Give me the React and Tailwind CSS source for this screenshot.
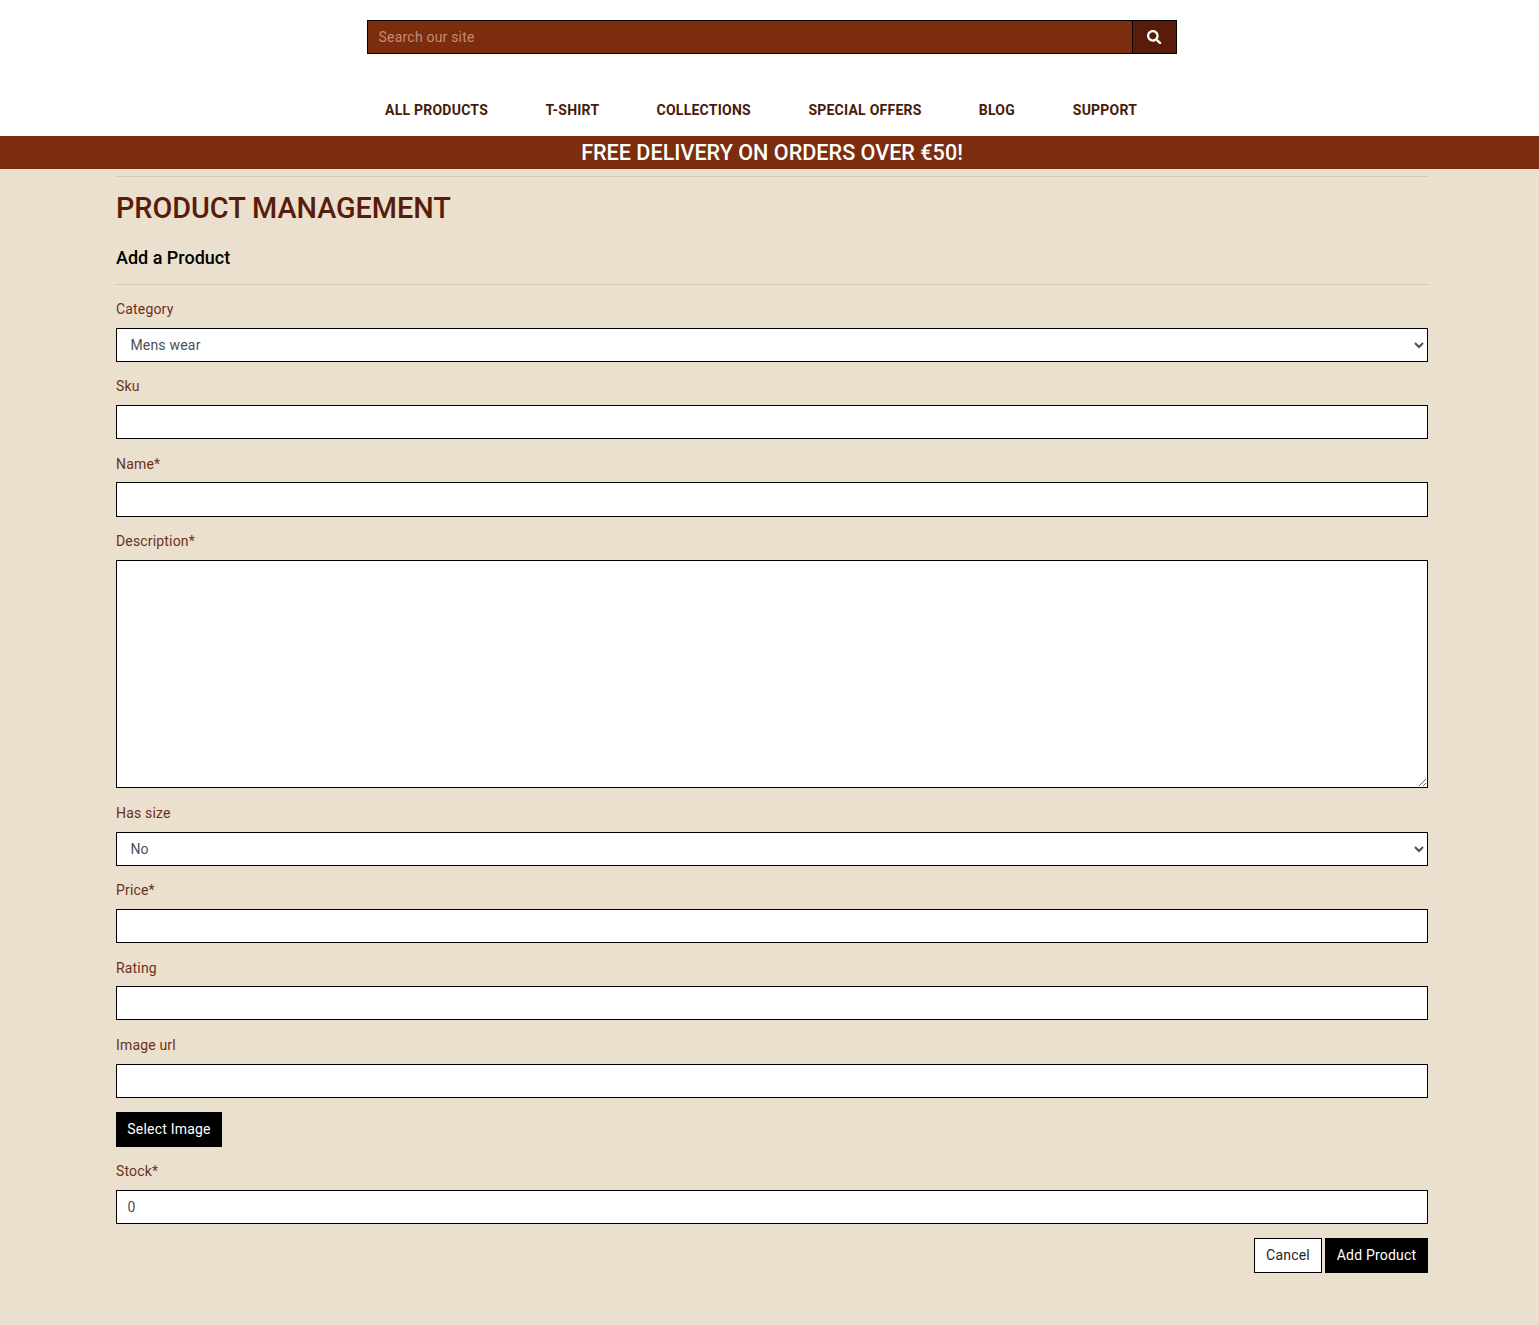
const field =
  'block w-full h-[34.2px] rounded-none border border-black bg-white text-[14px] tracking-[0.2px] text-[#495057] outline-none';
const input = `${field} px-[10.4px] py-0`;
const select = `${field} py-0 pr-[9.8px] pl-[9.4px]`;

const navItems = [
  ['ALL PRODUCTS', 'w-[160.4px]'],
  ['T-SHIRT', 'w-[111.2px]'],
  ['COLLECTIONS', 'w-[151.8px]'],
  ['SPECIAL OFFERS', 'w-[170.4px]'],
  ['BLOG', 'w-[94px]'],
  ['SUPPORT', ''],
];

function Field({ label, children }) {
  return (
    <div className="mb-[14.4px]">
      <label className="mb-[7.2px] block text-[14px] leading-[21.6px] tracking-[0.17px] text-[#6a3019]">{label}</label>
      {children}
    </div>
  );
}

function Header() {
  return (
    <header className="h-[136px] bg-white pt-5">
      <form className="ml-[367px] flex h-[34px] w-[810px]">
        <input
          type="text"
          placeholder="Search our site"
          className="min-w-0 flex-1 border border-black bg-[#7c2d0e] px-[10.6px] py-0 text-[14px] tracking-[0.2px] outline-none placeholder:text-[#c28b78]"
        />
        <button type="button" aria-label="Search" className="-ml-px flex w-[45px] items-center justify-center border border-black bg-[#591c0a] text-white">
          <svg viewBox="0 0 512 512" className="size-[14.4px]" fill="currentColor">
            <path d="M505 442.7L405.3 343c-4.5-4.5-10.6-7-17-7H372c27.6-35.3 44-79.7 44-128C416 93.1 322.9 0 208 0S0 93.1 0 208s93.1 208 208 208c48.3 0 92.7-16.4 128-44v16.3c0 6.4 2.5 12.5 7 17l99.7 99.7c9.4 9.4 24.6 9.4 33.9 0l28.3-28.3c9.4-9.4 9.4-24.6.1-34zM208 336c-70.7 0-128-57.2-128-128 0-70.7 57.2-128 128-128 70.7 0 128 57.2 128 128 0 70.7-57.2 128-128 128z" />
          </svg>
        </button>
      </form>
      <nav className="mt-[46px] ml-[385px] flex text-[14px] leading-[21px] font-bold tracking-[0.24px] text-[#471a0a]">
        {navItems.map(([item, width]) => (
          <a key={item} href="#" className={`whitespace-nowrap ${width}`}>{item}</a>
        ))}
      </nav>
    </header>
  );
}

export default function App() {
  return (
    <div className="h-[1325px] overflow-hidden bg-[#ebe0ce] font-[Roboto,sans-serif] text-[14.4px]">
      <Header />
      <div className="flex h-[33px] justify-center bg-[#7c2d0e] pl-[5px] text-[21.6px] leading-[33px] font-medium text-white">
        <h4>FREE DELIVERY ON ORDERS OVER €50!</h4>
      </div>
      <main className="ml-[116px] w-[1312px] pt-[7px]">
        <hr className="border-t border-[#d3c9b8]" />
        <h2 className="mt-[14px] h-[35px] text-[28.8px] leading-[34.6px] font-medium tracking-[-0.04px] text-[#591c0a]">PRODUCT MANAGEMENT</h2>
        <h5 className="mt-[21px] h-[22px] text-[18px] leading-[21.6px] font-medium text-black">Add a Product</h5>
        <hr className="mt-[15px] mb-[13.9px] border-t border-[#d3c9b8]" />
        <form>
          <Field label="Category">
            <select className={select}>
              <option>Mens wear</option>
            </select>
          </Field>
          <Field label="Sku"><input className={input} /></Field>
          <Field label="Name*"><input className={input} /></Field>
          <Field label="Description*">
            <textarea className="block h-[228.65px] w-full resize-y border border-black bg-white px-[10.8px] py-[5.4px] text-[#495057] outline-none" />
          </Field>
          <Field label="Has size">
            <select className={select}>
              <option>No</option>
            </select>
          </Field>
          <Field label="Price*"><input className={input} /></Field>
          <Field label="Rating"><input className={input} /></Field>
          <Field label="Image url"><input className={input} /></Field>
          <button type="button" className="mb-[14px] block h-[34.6px] w-[106px] bg-black text-[14px] tracking-[0.2px] text-white">Select Image</button>
          <Field label="Stock*"><input className={input} defaultValue="0" /></Field>
          <div className="flex justify-end gap-[3px]">
            <button type="button" className="h-[35px] w-[68px] border border-black bg-white text-[14px] tracking-[0.2px] text-[#212529]">Cancel</button>
            <button type="button" className="h-[35px] w-[103px] bg-black text-[14px] tracking-[0.2px] text-white">Add Product</button>
          </div>
        </form>
      </main>
    </div>
  );
}
